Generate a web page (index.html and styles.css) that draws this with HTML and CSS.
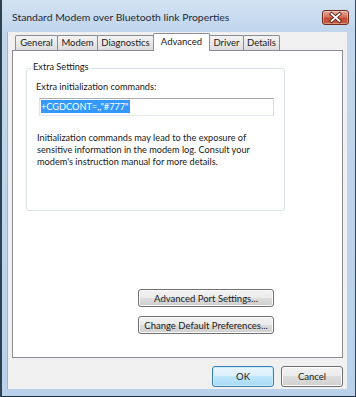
FILE: index.html
```html
<!DOCTYPE html>
<html lang="en">
<head>
  <meta charset="UTF-8" />
  <title>Standard Modem over Bluetooth link Properties</title>
  <link rel="stylesheet" href="styles.css">
</head>
<body>
  <div class="window">
    <div class="titlebar">
      <span class="title">Standard Modem over Bluetooth link Properties</span>
      <button class="close" aria-label="Close">
        <svg width="27" height="15" viewBox="0 0 27 15">
          <path d="M9.5 4 L17.5 11 M17.5 4 L9.5 11" stroke="#5a2216" stroke-width="3.6" stroke-linecap="square"/>
          <path d="M9.5 4 L17.5 11 M17.5 4 L9.5 11" stroke="#ffffff" stroke-width="1.8" stroke-linecap="square"/>
        </svg>
      </button>
    </div>

    <div class="client">
      <div class="tabs">
        <div class="tab tab-general">General</div>
        <div class="tab tab-modem">Modem</div>
        <div class="tab tab-diag">Diagnostics</div>
        <div class="tab tab-adv selected">Advanced</div>
        <div class="tab tab-driver">Driver</div>
        <div class="tab tab-details">Details</div>
      </div>

      <div class="panel">
        <div class="group">
          <div class="legend">Extra Settings</div>
          <label class="field-label" for="initcmd">Extra initialization commands:</label>
          <div class="textbox" id="initcmd"><span class="sel">+CGDCONT=,,"#777"</span></div>
          <p class="note">Initialization commands may lead to the exposure of<br>
            sensitive information in the modem log. Consult your<br>
            modem's instruction manual for more details.</p>
        </div>

        <div class="actions">
          <button class="btn wide">Advanced Port Settings...</button>
          <button class="btn wide">Change Default Preferences...</button>
        </div>
      </div>

      <div class="dialog-buttons">
        <button class="btn dlg default">OK</button>
        <button class="btn dlg">Cancel</button>
      </div>
    </div>
  </div>
</body>
</html>
```

FILE: styles.css
```css
body {
  margin: 0;
  font-family: Lato, "Noto Sans", sans-serif;
  font-size: 9.2px;
  color: #1a1a1a;
}
.window {
  width: 356px;
  height: 397px;
  box-sizing: border-box;
  border-left: 2px solid #2e4150;
  border-right: 1px solid #34495a;
  border-bottom: 1px solid #1d2d3a;
  padding: 0 8px 7px 6px;
  background: linear-gradient(#d2e2f3, #c1d6ed 30px, #b9d1ea);
  display: flex;
  flex-direction: column;
}
.titlebar {
  height: 32px;
  display: flex;
  justify-content: space-between;
  align-items: flex-start;
}
.title {
  margin: 10px 0 0 4px;
  font-size: 10.4px;
  line-height: 14px;
  color: #1e2a36;
}
.close {
  width: 27px;
  height: 15px;
  margin: 10px -2px 0 0;
  padding: 0;
  border: 1px solid #6e2b1e;
  border-radius: 3px;
  background: linear-gradient(#e6a99a, #d47462 45%, #c24b33 55%, #c65a3c);
  box-shadow: inset 0 0 0 1px rgba(255,255,255,0.35);
  display: flex;
  align-items: center;
  justify-content: center;
}
.close svg {
  display: block;
  margin: -1px;
}
.client {
  flex: 1;
  background: #f0f0f0;
  padding: 1px 4px 0 4px;
  display: flex;
  flex-direction: column;
  box-shadow: -1px 0 0 #9fb5cc;
}
.tabs {
  height: 17px;
  display: flex;
  align-items: flex-end;
  padding-left: 3px;
  position: relative;
  z-index: 1;
  font-size: 9.5px;
}
.tab {
  height: 15px;
  box-sizing: border-box;
  border: 1px solid #898c95;
  border-bottom: none;
  border-radius: 2px 2px 0 0;
  margin-left: -1px;
  background: linear-gradient(#f4f4f4, #e9e9e9 50%, #dcdcdc);
  text-align: center;
  line-height: 14px;
}
.tab:first-child {
  margin-left: 0;
}
.tab.selected {
  height: 18px;
  margin-bottom: -1px;
  background: #fff;
  line-height: 15px;
  position: relative;
}
.tab-general { width: 43px; }
.tab-modem { width: 41px; }
.tab-diag { width: 57px; }
.tab-adv { width: 57px; }
.tab-driver { width: 35px; }
.tab-details { width: 37px; }

.panel {
  height: 308px;
  box-sizing: border-box;
  background: #fff;
  border: 1px solid #898c95;
}
.group {
  margin: 17px 0 0 13px;
  width: 259px;
  height: 143px;
  box-sizing: border-box;
  border: 1px solid #d5dfe5;
  border-radius: 3px;
}
.legend {
  display: table;
  margin: -9px 0 0 4px;
  padding: 0 2px;
  background: #fff;
  line-height: 14px;
}
.field-label {
  display: block;
  margin: 6px 0 0 9px;
  line-height: 14px;
}
.textbox {
  margin: 4px 0 0 12px;
  width: 235px;
  height: 18px;
  box-sizing: border-box;
  border: 1px solid #abadb3;
  border-color: #abadb3 #dbdfe6 #e3e9ef #e2e3ea;
  padding: 1px 0 0 1px;
}
.sel {
  display: inline-block;
  background: #3399ff;
  color: #fff;
  line-height: 13px;
  padding-right: 1px;
}
.note {
  margin: 16px 0 0 10px;
  line-height: 12px;
  white-space: nowrap;
}
.actions {
  margin: 78px 0 0 125px;
  display: flex;
  flex-direction: column;
  align-items: flex-start;
  gap: 9px;
}
.btn {
  font-family: Lato, "Noto Sans", sans-serif;
  font-size: 9.5px;
  color: #1a1a1a;
  padding: 0;
  white-space: nowrap;
  border: 1px solid #707070;
  border-radius: 3px;
  background: linear-gradient(#f2f2f2, #ebebeb 49%, #dddddd 50%, #cfcfcf);
  box-shadow: inset 0 0 0 1px #fbfbfb;
}
.wide {
  width: 136px;
  height: 18px;
}
.dialog-buttons {
  margin-top: 8px;
  display: flex;
  justify-content: flex-end;
  gap: 7px;
}
.dlg {
  width: 62px;
  height: 21px;
}
.default {
  border-color: #3c7fb1;
  background: linear-gradient(#eaf6fd, #d9f0fc 49%, #bee6fd 50%, #a7d9f5);
  box-shadow: inset 0 0 0 1px #c6ecf9;
}
```
